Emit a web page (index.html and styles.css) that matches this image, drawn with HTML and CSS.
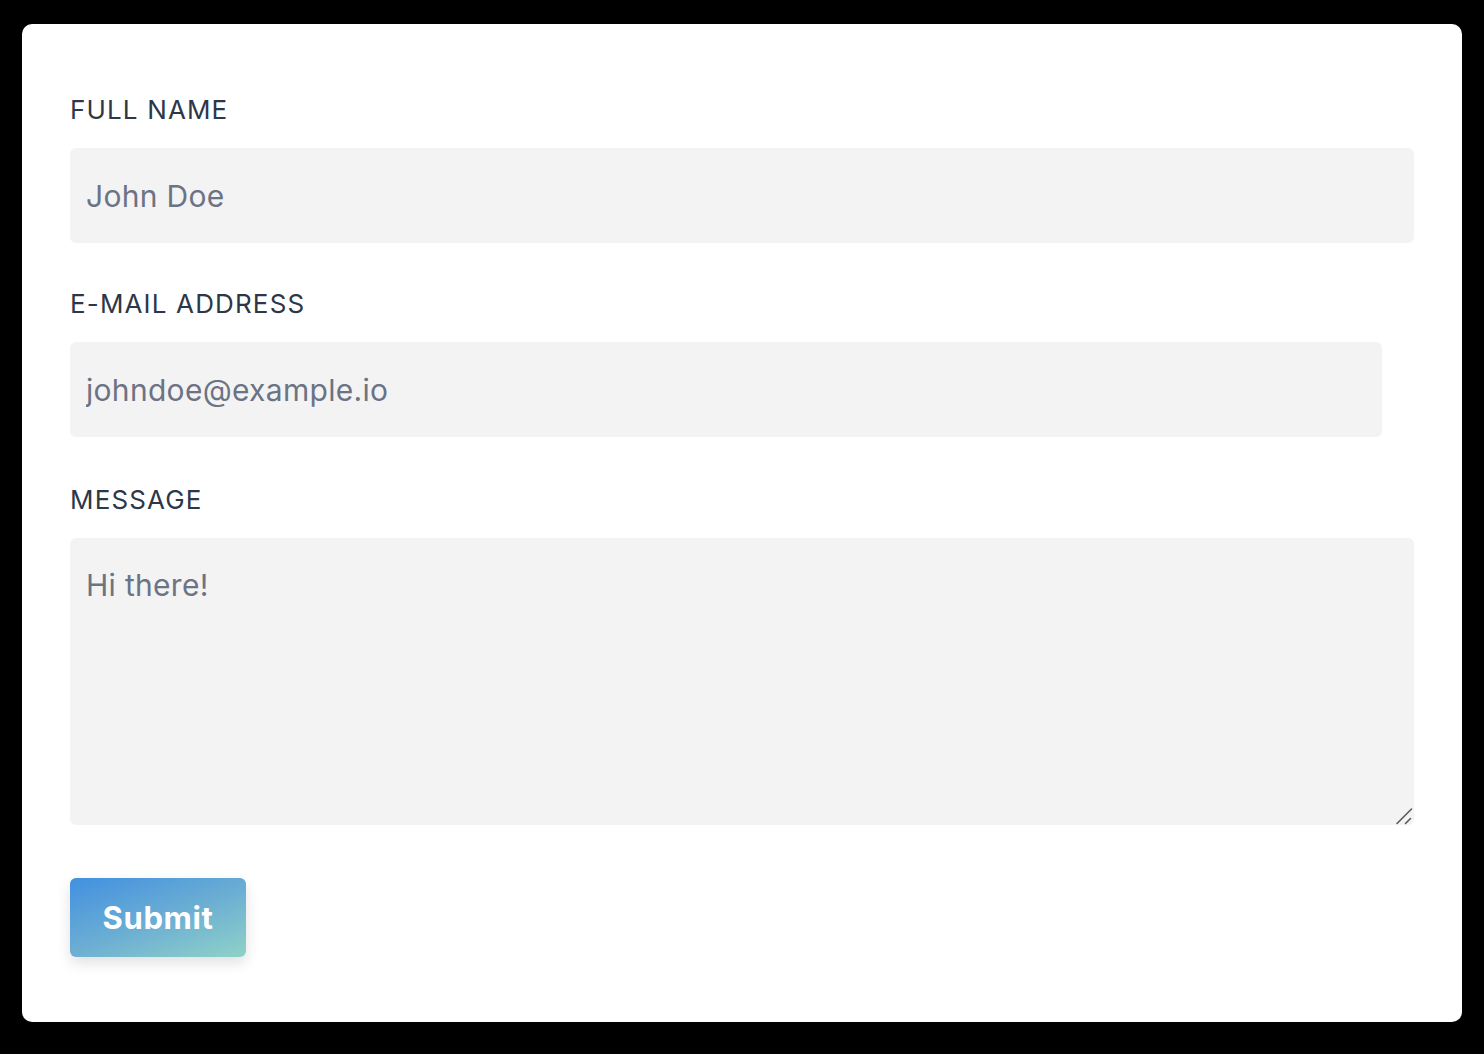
FILE: index.html
```html
<!DOCTYPE html>
<html lang="en">
<head>
<meta charset="utf-8">
<title>Contact form</title>
<link rel="stylesheet" href="styles.css">
</head>
<body>
<main class="card">
  <form class="form">
    <label class="label" for="name">FULL NAME</label>
    <input class="field" id="name" type="text" value="John Doe">

    <label class="label" for="email">E-MAIL ADDRESS</label>
    <input class="field field-short" id="email" type="email" value="johndoe@example.io">

    <label class="label" for="msg">MESSAGE</label>
    <div class="area-wrap">
      <textarea class="field area" id="msg">Hi there!</textarea>
      <svg class="grip" width="18" height="18" viewBox="0 0 18 18" aria-hidden="true">
        <line x1="2" y1="16.5" x2="16.5" y2="2" stroke="#5c5c5c" stroke-width="1.6" stroke-linecap="round"/>
        <line x1="10.5" y1="16.5" x2="15.5" y2="11.5" stroke="#5c5c5c" stroke-width="1.6" stroke-linecap="round"/>
      </svg>
    </div>

    <div class="actions">
      <button class="submit" type="button">Submit</button>
    </div>
  </form>
</main>
</body>
</html>
```

FILE: styles.css
```css
html, body {
  margin: 0;
  padding: 0;
  background: #000;
}

body {
  font-family: Inter, "Noto Sans", "Liberation Sans", sans-serif;
  padding: 24px 22px 32px;
}

.card {
  background: #fff;
  border-radius: 10px;
  height: 998px;
  box-sizing: border-box;
  padding: 67px 48px 0;
}

.form {
  display: flex;
  flex-direction: column;
  align-items: flex-start;
}

.label {
  display: block;
  font-size: 26px;
  line-height: 37px;
  color: #2d3748;
  margin-bottom: 20px;
  letter-spacing: 1.15px;
}

.field {
  display: block;
  box-sizing: border-box;
  width: 100%;
  height: 95px;
  border: none;
  outline: none;
  border-radius: 6px;
  background: #f3f3f3;
  padding: 0 16px;
  margin: 0 0 42px;
  font-family: inherit;
  font-size: 30px;
  letter-spacing: 0.3px;
  color: #6b7385;
}

.field-short {
  width: calc(100% - 32px);
  margin-bottom: 44px;
}

.area-wrap {
  position: relative;
  width: 100%;
  margin-bottom: 53px;
}

.area {
  height: 287px;
  padding: 25px 16px;
  line-height: 45px;
  margin: 0;
  resize: none;
}

.grip {
  position: absolute;
  right: 1px;
  bottom: 0;
}

.submit {
  display: block;
  width: 176px;
  height: 79px;
  border: none;
  border-radius: 6px;
  background: linear-gradient(160deg, #4290e0 0%, #6eb0d2 55%, #8fd2c8 100%);
  color: #fff;
  font-family: inherit;
  font-size: 31px;
  letter-spacing: 0.6px;
  font-weight: 700;
  box-shadow: 0 6px 14px rgba(0, 0, 0, 0.12);
  padding: 0;
}
```
